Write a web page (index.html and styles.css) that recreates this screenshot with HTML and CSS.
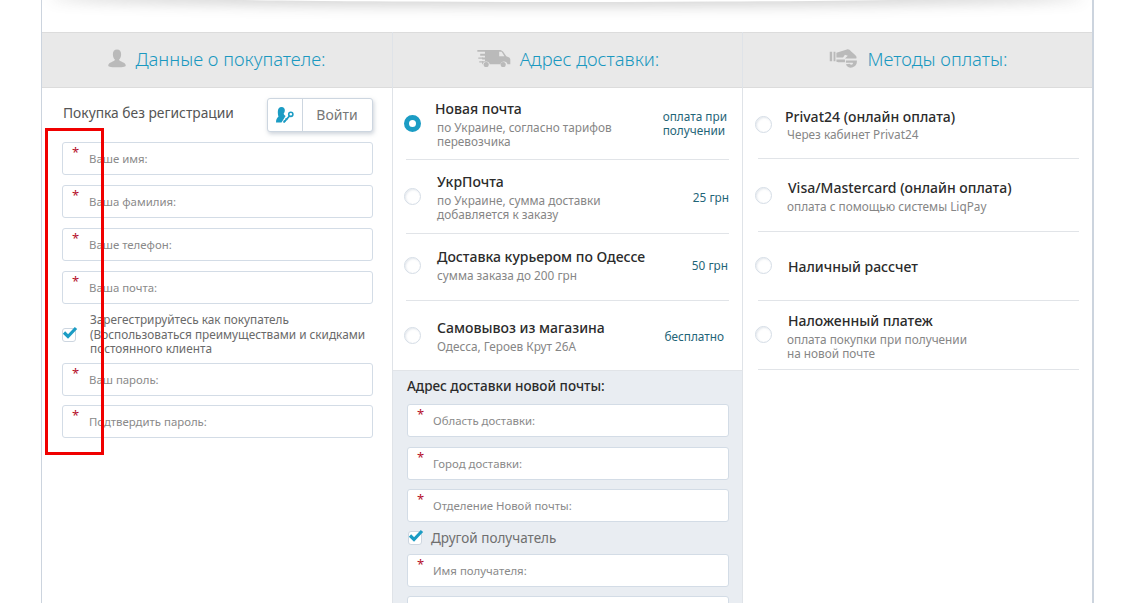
FILE: index.html
```html
<!DOCTYPE html>
<html lang="ru">
<head>
    <meta charset="UTF-8" />
    <title>Оформление заказа</title>
    <link rel="stylesheet" href="styles.css">
</head>
<body>

<div class="checkout">
    <div class="top-shadow"></div>

    <div class="col col-buyer">
        <div class="col-head">
            <svg class="head-icon" width="18" height="19" viewBox="0 0 20 20"><path fill="#bababa" d="M10 0c3 0 4.600 2.300 4.600 5.200 0 2.600-1 4.700-2.300 6 .2 1.500 2 2.100 4 2.900 2 .8 3.400 1.800 3.400 3.600 0 1.200-1.500 2.100-9.700 2.100S.3 18.900.3 17.700c0-1.800 1.400-2.800 3.400-3.600 2-.8 3.800-1.400 4-2.900-1.300-1.300-2.300-3.400-2.300-6C5.400 2.300 7 0 10 0z"/></svg>
            <h2>Данные о покупателе:</h2>
        </div>
        <div class="col-body buyer-body">
            <div class="login-row">
                <span class="login-text">Покупка без регистрации</span>
                <div class="login-btn">
                    <span class="login-icon">
                        <svg width="18" height="16" viewBox="0 0 18 16"><path fill="#1b9cc4" d="M5.500 0C8 0 9 1.800 8.800 3.700c-.1 1.300-.7 2.300-1.200 3 .3 1 1 1.700 2 2.300L5.500 15.500H0c0-2.800.8-4.500 2.500-6C2 8.300 1.800 6.500 1.800 4.800 1.800 2 3.200 0 5.500 0z"/><path fill="none" stroke="#1b9cc4" stroke-width="1.800" d="M7.500 15.500l6-6.500"/><path fill="none" stroke="#1b9cc4" stroke-width="1.300" d="M9.500 11.500l1.800 1.600M7.800 13.500l1.500 1.400"/><circle cx="14.800" cy="7.300" r="2.100" fill="none" stroke="#1b9cc4" stroke-width="1.600"/></svg>
                    </span>
                    <span class="login-label">Войти</span>
                </div>
            </div>
            <div class="field"><i>*</i><span>Ваше имя:</span></div>
            <div class="field"><i>*</i><span>Ваша фамилия:</span></div>
            <div class="field"><i>*</i><span>Ваше телефон:</span></div>
            <div class="field"><i>*</i><span>Ваша почта:</span></div>
            <div class="register">
                <span class="check">
                    <svg width="16" height="14" viewBox="0 0 16 14"><path fill="none" stroke="#1b9cc4" stroke-width="3.200" d="M2 6.500l4 4 8-8.500"/></svg>
                </span>
                <p>Зарегестрируйтесь как покупатель (Воспользоваться преимуществами и скидками постоянного клиента</p>
            </div>
            <div class="field"><i>*</i><span>Ваш пароль:</span></div>
            <div class="field"><i>*</i><span>Подтвердить пароль:</span></div>
        </div>
    </div>

    <div class="col col-delivery">
        <div class="col-head">
            <svg class="head-icon" width="35" height="19" viewBox="0 0 36 20"><path fill="#bababa" d="M9 1h15c2 0 3 .5 4.200 2l3.300 4.500 3 1.500c.8.500 1.200 1.300 1.200 2.500V16h-3a3.800 3.800 0 0 0-7.400 0H14a3.800 3.800 0 0 0-7.400 0H6V13h3V11H6V9h3V7H4V5h5V3H1V1z"/><path fill="#e9e9e9" d="M24 3h2.500l3 4.500H24z"/><circle cx="10.300" cy="16.300" r="2.700" fill="#bababa"/><circle cx="28.200" cy="16.300" r="2.700" fill="#bababa"/><path fill="#bababa" d="M2 9h5v1.200H2zM3 13h4v1.200H3z"/></svg>
            <h2>Адрес доставки:</h2>
        </div>
        <div class="col-body">
            <div class="option opt-np">
                <span class="radio radio-on"></span>
                <div class="opt-text opt-shift">
                    <b>Новая почта</b>
                    <small>по Украине, согласно тарифов<br>перевозчика</small>
                </div>
                <span class="price price-np">оплата при<br>получении</span>
            </div>
            <div class="option opt-ukr">
                <span class="radio"></span>
                <div class="opt-text">
                    <b>УкрПочта</b>
                    <small>по Украине, сумма доставки<br>добавляется к заказу</small>
                </div>
                <span class="price">25 грн</span>
            </div>
            <div class="option opt-courier">
                <span class="radio"></span>
                <div class="opt-text">
                    <b>Доставка курьером по Одессе</b>
                    <small>сумма заказа до 200 грн</small>
                </div>
                <span class="price price-50">50 грн</span>
            </div>
            <div class="option opt-self">
                <span class="radio"></span>
                <div class="opt-text">
                    <b>Самовывоз из магазина</b>
                    <small>Одесса, Героев Крут 26А</small>
                </div>
                <span class="price price-free">бесплатно</span>
            </div>
            <div class="np-address">
                <h3>Адрес доставки новой почты:</h3>
                <div class="field"><i>*</i><span>Область доставки:</span></div>
                <div class="field"><i>*</i><span>Город доставки:</span></div>
                <div class="field"><i>*</i><span>Отделение Новой почты:</span></div>
                <div class="other">
                    <span class="check">
                        <svg width="16" height="14" viewBox="0 0 16 14"><path fill="none" stroke="#1b9cc4" stroke-width="3.200" d="M2 6.500l4 4 8-8.500"/></svg>
                    </span>
                    <span>Другой получатель</span>
                </div>
                <div class="field"><i>*</i><span>Имя получателя:</span></div>
                <div class="field"></div>
            </div>
        </div>
    </div>

    <div class="col col-pay">
        <div class="col-head">
            <svg class="head-icon" width="30" height="19" viewBox="0 0 30 20"><path fill="#bababa" d="M0 3h2.500v10H0zM4 3h2v10H4z"/><path fill="#bababa" d="M7 4l6-2 5-1.500c2-.5 3 .5 4 1.500l4.500 4c1.500 1.300 2 2.500 1.500 4H16l3-3-3-1-2 3H7z"/><path fill="#bababa" d="M7 11h9v3H9l-2-.5zM17 12h11.500c.5 3-1 6.500-5 7.500-3 .6-5.500-1-6.500-3.500l4-.5c.8 1 2 1.300 3 .5.500-.5.500-1 .3-1.500H17z"/></svg>
            <h2>Методы оплаты:</h2>
        </div>
        <div class="col-body pay-body">
            <div class="option pay-a">
                <span class="radio"></span>
                <div class="opt-text opt-shift">
                    <b>Privat24 (онлайн оплата)</b>
                    <small>Через кабинет Privat24</small>
                </div>
            </div>
            <div class="option pay-b">
                <span class="radio"></span>
                <div class="opt-text">
                    <b>Visa/Mastercard (онлайн оплата)</b>
                    <small>оплата с помощью системы LiqPay</small>
                </div>
            </div>
            <div class="option pay-c">
                <span class="radio"></span>
                <div class="opt-text">
                    <b>Наличный рассчет</b>
                </div>
            </div>
            <div class="option pay-d">
                <span class="radio"></span>
                <div class="opt-text">
                    <b>Наложенный платеж</b>
                    <small>оплата покупки при получении<br>на новой почте</small>
                </div>
            </div>
        </div>
    </div>

    <div class="red-frame"></div>
</div>

</body>
</html>
```

FILE: styles.css
```css
html, body {
    height: 603px;
    overflow: hidden;
}

body {
    font-family: "Noto Sans", "Open Sans", sans-serif;
    background-color: #fff;
    margin: 0;
    padding: 0;
    color: #333;
}

.checkout {
    position: relative;
    box-sizing: border-box;
    width: 1053px;
    height: 603px;
    margin-left: 41px;
    padding-top: 32px;
    overflow: hidden;
    display: grid;
    grid-template-columns: 351px 350px 350px;
    border-left: 1px solid #ccd4de;
    border-right: 2px solid #ccd4de;
}

.top-shadow {
    position: absolute;
    left: 8px;
    right: 8px;
    top: -16px;
    height: 18px;
    border-radius: 50%;
    background: #fff;
    box-shadow: 0 4px 14px rgba(90, 90, 90, .28);
}

.col {
    border-right: 1px solid #dfe3e8;
}

.col-pay {
    border-right: none;
}

.col-head {
    box-sizing: border-box;
    height: 56px;
    padding-bottom: 3px;
    background-color: #e9e9e9;
    border-top: 1px solid #dcdcdc;
    border-bottom: 1px solid #dcdcdc;
    display: flex;
    align-items: center;
    justify-content: center;
    gap: 9px;
}

.col-head h2 {
    margin: 0;
    font-size: 18.400px;
    font-weight: 300;
    color: #1a98c0;
}

.buyer-body {
    padding: 10px 19px 0 20px;
}

.login-row {
    display: flex;
    align-items: flex-start;
    justify-content: space-between;
    height: 44px;
}

.login-text {
    font-size: 13.800px;
    line-height: 30px;
    margin-left: 1px;
    color: #555;
}

.login-btn {
    box-sizing: border-box;
    width: 106px;
    height: 34px;
    display: flex;
    background: #fff;
    border: 1px solid #cdd6e0;
    border-radius: 3px;
    box-shadow: 1px 2px 4px rgba(110, 125, 145, .35);
}

.login-icon {
    width: 34px;
    display: flex;
    align-items: center;
    justify-content: center;
    border-right: 1px solid #cdd6e0;
}

.login-label {
    flex: 1;
    text-align: center;
    font-size: 14px;
    line-height: 32px;
    padding-right: 1px;
    color: #777;
}

.field {
    position: relative;
    box-sizing: border-box;
    height: 33px;
    margin-bottom: 10px;
    padding-left: 26px;
    background: #fff;
    border: 1px solid #d3dce6;
    border-radius: 3px;
    font-size: 11.400px;
    line-height: 31px;
    color: #8a8a8a;
}

.field i {
    position: absolute;
    left: 9px;
    top: -6px;
    font-style: normal;
    font-size: 13px;
    color: #b5102a;
}

.register {
    display: flex;
    align-items: center;
    gap: 14px;
    height: 50px;
    margin: -4px 0 3px 0;
}

.register p {
    margin: 0 0 2px 0;
    font-size: 11.800px;
    line-height: 14.500px;
    color: #6a6a6a;
}

.buyer-body .field:last-child {
    margin-top: -1px;
}

.check {
    position: relative;
    flex: none;
    box-sizing: border-box;
    width: 14px;
    height: 14px;
    background: #fff;
    border: 1px solid #cdd6e0;
    border-radius: 3px;
}

.check svg {
    position: absolute;
    left: -1px;
    top: -3px;
}

.option {
    box-sizing: border-box;
    position: relative;
    display: flex;
    align-items: center;
    margin: 0 13px 0 13px;
    padding-left: 31px;
    border-bottom: 1px solid #e1e4e8;
}

.radio {
    position: absolute;
    left: -2px;
    top: 50%;
    box-sizing: border-box;
    width: 17px;
    height: 17px;
    margin-top: -9px;
    background: #fff;
    border: 1px solid #d5dde6;
    border-radius: 50%;
    box-shadow: inset 1px 1px 2px rgba(120, 140, 165, .2);
}

.radio-on {
    border: 5px solid #1b9cc4;
    box-shadow: none;
}

.opt-text {
    flex: 1;
    padding-top: 1px;
}

.opt-text b {
    display: block;
    font-size: 14px;
    line-height: 18px;
    font-weight: 500;
    color: #2b2b2b;
}

.opt-text small {
    display: block;
    font-size: 11.800px;
    line-height: 14px;
    margin-top: 2px;
    color: #868686;
}

.opt-shift b {
    margin-left: -2px;
}

.price {
    font-size: 11.800px;
    line-height: 14px;
    color: #1f6578;
    white-space: nowrap;
}

.price-np {
    margin: 0 2px 2px 0;
}

.price-50 {
    margin-right: 1px;
}

.price-free {
    margin-right: 5px;
}

.opt-np {
    height: 72px;
}

.opt-ukr {
    height: 74px;
}

.opt-courier {
    height: 67px;
}

.opt-courier .opt-text {
    padding: 0 0 4px 0;
}

.opt-courier .price {
    padding-bottom: 4px;
}

.opt-courier .radio {
    margin-top: -10px;
}

.opt-self {
    height: 69px;
    border-bottom: none;
}

.np-address {
    background-color: #e9edf2;
    padding: 6px 13px 0 14px;
    border-top: 1px solid #e1e4e8;
}

.np-address h3 {
    margin: 0 0 9px 0;
    font-size: 13.500px;
    line-height: 18px;
    font-weight: 500;
    color: #2b2b2b;
}

.np-address .field {
    margin-bottom: 9.500px;
    padding-left: 25px;
}

.other {
    display: flex;
    align-items: center;
    gap: 9px;
    height: 22px;
    margin: -5px 0 5px 1px;
    font-size: 13.500px;
    color: #6f6f6f;
}

.pay-body {
    padding: 0 1px 0 2px;
}

.pay-body .option {
    padding-left: 30px;
}

.pay-body .radio {
    left: -3px;
}

.pay-body small {
    margin-left: -1px;
}

.pay-a {
    height: 71px;
}

.pay-b {
    height: 73px;
}

.pay-c {
    height: 69px;
}

.pay-d {
    height: 69px;
}

.pay-a .radio {
    margin-top: -7px;
}

.pay-a .opt-text {
    padding-top: 2px;
}

.pay-a small {
    margin-top: 1px;
}

.pay-a b {
    margin-left: -3px;
}

.pay-b .radio {
    margin-top: -8px;
}

.pay-d .radio {
    margin-top: -9px;
}

.pay-d .opt-text {
    padding-top: 2px;
}

.red-frame {
    position: absolute;
    left: 3px;
    top: 128px;
    box-sizing: border-box;
    width: 59px;
    height: 327px;
    border: 3px solid #f00000;
}
```
